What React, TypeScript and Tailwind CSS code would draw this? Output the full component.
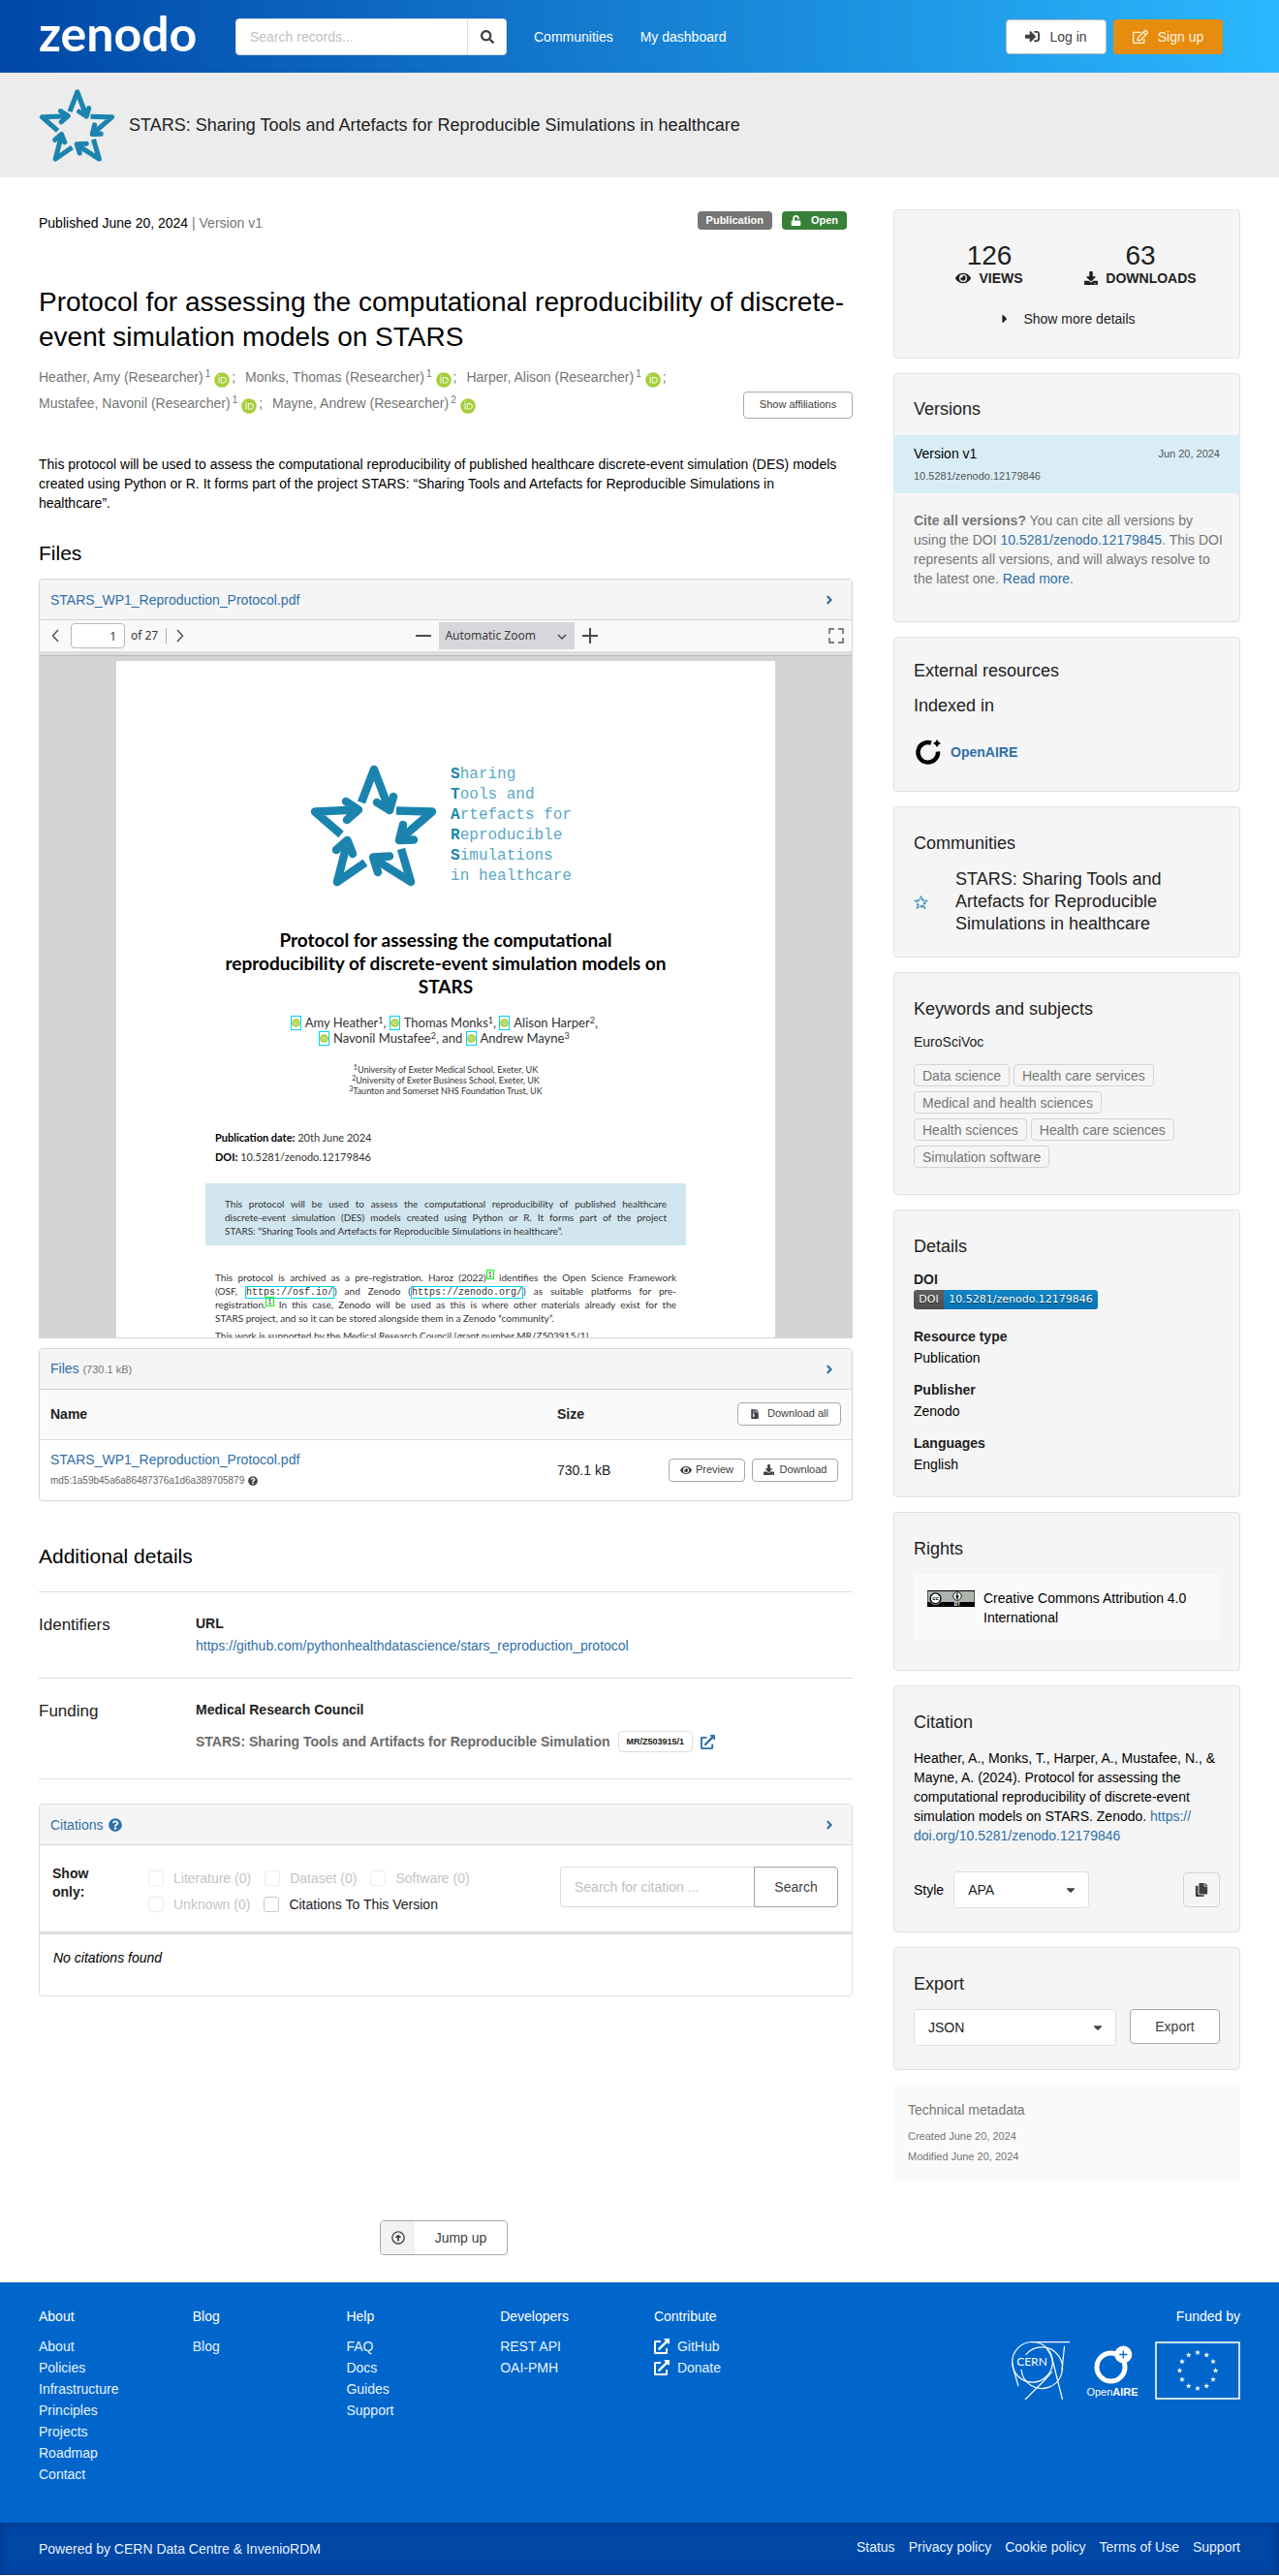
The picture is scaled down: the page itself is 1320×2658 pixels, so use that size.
import type { ReactNode } from 'react';
import {
  FaAngleRight,
  FaCaretDown,
  FaCaretRight,
  FaCopy,
  FaDownload,
  FaExternalLinkAlt,
  FaEye,
  FaFileArchive,
  FaOrcid,
  FaQuestionCircle,
  FaRegArrowAltCircleUp,
  FaRegEdit,
  FaSearch,
  FaSignInAlt,
  FaUnlock,
} from 'react-icons/fa';

function StarsLogo({ className }: { className: string }) {
  return (
    <svg viewBox="0 0 131 126" className={className} fill="none" stroke="#1b84ae" strokeWidth="8.5" strokeLinejoin="round" aria-hidden="true">
      <path d="M53 39 L66 5 L82 47" />
      <path d="M89 47.5 L126 48.5 L93 77" />
      <path d="M94 87 L104 121 L66 97" />
      <path d="M57 101 L28 121 L38.5 80" />
      <path d="M32 72 L5 48.5 L49 46.5" />
      <g strokeLinecap="round">
        <path d="M69 39 L82 47 L86 33" />
        <path d="M96 62 L92 78 L107 77.5" />
        <path d="M82 94.5 L65 95.5 L70 111" />
        <path d="M27 88 L38.5 78 L44 92" />
        <path d="M37 38 L50 46.5 L38 57" />
      </g>
    </svg>
  );
}

function Orcid({ className }: { className: string }) {
  return (
    <span className={'inline-flex shrink-0 rounded-full bg-white text-[#a6ce39] ' + className}>
      <FaOrcid className="h-full w-full" />
    </span>
  );
}

function OpenAireMark() {
  return (
    <svg viewBox="0 0 30 28" className="h-7 w-[30px]" aria-hidden="true">
      <path d="M18 4.6 A10.3 10.3 0 1 0 25 13.5" fill="none" stroke="#000" strokeWidth="4.4" />
      <path d="M24 1 L25.6 3.6 L28 5 L25.6 6.5 L24 9 L22.4 6.5 L20 5 L22.4 3.6 Z" fill="#000" />
    </svg>
  );
}

function CernLogo() {
  return (
    <svg viewBox="0 0 60 60" className="h-[60px] w-[60px]" fill="none" stroke="#fff" strokeWidth="1.2" role="img" aria-label="CERN">
      <circle cx="21.5" cy="21.3" r="20.8" />
      <path d="M14.5 14 A21.3 21.3 0 1 1 10 29" />
      <path d="M21 0.7 H60" />
      <path d="M36.500 7.500 Q41 13 42.500 20 L52.500 60" />
      <path d="M54.500 5 L52 30" />
      <path d="M42 31 Q38 36 34 40 L14 60" />
      <path d="M0.800 22 Q1.500 27 3 32 L7 46" />
      <text x="21" y="25" textAnchor="middle" fontSize="12" fill="#fff" stroke="none" fontFamily="Lato, sans-serif">CERN</text>
    </svg>
  );
}

function OpenAireFooterLogo() {
  return (
    <svg viewBox="0 0 54 60" className="h-[60px] w-[54px]" role="img" aria-label="OpenAIRE">
      <circle cx="25.500" cy="26.500" r="14.500" fill="none" stroke="#fff" strokeWidth="5" />
      <circle cx="38.300" cy="13.500" r="9" fill="#fff" />
      <path d="M34.300 13.500 H42.300 M38.300 9.500 V17.500" stroke="#0066cb" strokeWidth="1.300" />
      <text x="27" y="55.500" textAnchor="middle" fontSize="11" fill="#fff" fontFamily="Liberation Sans, sans-serif">
        Open<tspan fontWeight="700">AIRE</tspan>
      </text>
    </svg>
  );
}

const starPoints = '0,-3 0.8,-0.95 2.85,-0.93 1.2,0.4 1.76,2.43 0,1.25 -1.76,2.43 -1.2,0.4 -2.85,-0.93 -0.8,-0.95';

function EuLogo() {
  return (
    <svg viewBox="0 0 88 60" className="h-[60px] w-[88px]" role="img" aria-label="European Union">
      <rect x="1" y="1" width="86" height="58" fill="none" stroke="#fff" strokeWidth="1.600" />
      {Array.from({ length: 12 }, (_, i) => {
        const a = (i * Math.PI) / 6;
        return <polygon key={i} points={starPoints} fill="#fff" transform={`translate(${44 + 18.5 * Math.sin(a)} ${30 - 18.5 * Math.cos(a)})`} />;
      })}
    </svg>
  );
}

function CcBadge() {
  return (
    <svg viewBox="0 0 49 17" className="mt-0.5 h-[17px] w-[49px] shrink-0" role="img" aria-label="CC BY">
      <rect width="49" height="17" fill="#000" />
      <rect x="0.500" y="1" width="48" height="11" fill="#abb3ac" />
      <circle cx="8.500" cy="8.300" r="6.800" fill="#abb3ac" />
      <circle cx="8.500" cy="8.300" r="5.400" fill="#fff" stroke="#000" strokeWidth="1.300" />
      <text x="8.500" y="10.400" textAnchor="middle" fontSize="6" fontWeight="700" fontFamily="Liberation Sans, sans-serif">cc</text>
      <circle cx="31" cy="6" r="4.200" fill="#fff" stroke="#000" strokeWidth="0.900" />
      <circle cx="31" cy="3.600" r="0.900" />
      <path d="M29.600 4.900 H32.400 V7 H31.800 V9 H30.200 V7 H29.600 Z" />
      <text x="31" y="16.300" textAnchor="middle" fontSize="4.500" fontWeight="700" fill="#fff" fontFamily="Liberation Sans, sans-serif">BY</text>
    </svg>
  );
}

function Link({ children, className = '' }: { children: ReactNode; className?: string }) {
  return <a href="#" className={'text-[#2f6fa7] ' + className}>{children}</a>;
}

function Card({ title, className, children }: { title?: string; className: string; children: ReactNode }) {
  return (
    <section className={'rounded border border-[#e0e1e2] bg-[#f5f5f5] ' + className}>
      {title && <h2 className="px-5 text-lg/6 text-[#212121]">{title}</h2>}
      {children}
    </section>
  );
}

function PanelHeader({ children }: { children: ReactNode }) {
  return (
    <div className="flex h-[42px] items-center justify-between border-b border-[#d4d4d5] bg-[#f5f5f5] pr-4 pl-[11px]">
      <h3 className="flex items-center gap-2 leading-5">{children}</h3>
      <button type="button" aria-label="Toggle section" className="text-[#2f6fa7]">
        <FaAngleRight className="size-3.5" />
      </button>
    </div>
  );
}

function SmallButton({ children, className = '' }: { children: ReactNode; className?: string }) {
  return (
    <button type="button" className={'inline-flex h-6 items-center justify-center rounded border border-[#a8a8a8] bg-white text-[11px] text-[#404040] ' + className}>
      {children}
    </button>
  );
}

function Dropdown({ id, value, className }: { id: string; value: string; className: string }) {
  return (
    <div className={'relative ' + className}>
      <select id={id} aria-label={id} defaultValue={value} className="h-[38px] w-full appearance-none rounded border border-[#dedede] bg-white pr-8 pl-3.5 text-[#212121]">
        <option>{value}</option>
      </select>
      <FaCaretDown className="pointer-events-none absolute top-3 right-3 size-3.5 text-[#404040]" />
    </div>
  );
}

const authors = [
  ['Heather, Amy (Researcher)', '1'],
  ['Monks, Thomas (Researcher)', '1'],
  ['Harper, Alison (Researcher)', '1'],
  ['Mustafee, Navonil (Researcher)', '1'],
  ['Mayne, Andrew (Researcher)', '2'],
];

const acronym = [
  ['S', 'haring'],
  ['T', 'ools and'],
  ['A', 'rtefacts for'],
  ['R', 'eproducible'],
  ['S', 'imulations'],
  ['', 'in healthcare'],
];

function Sup({ children }: { children: ReactNode }) {
  return <sup className="top-[-0.5em] text-[9px]">{children}</sup>;
}

function PdfAuthor({ name, mark, tail }: { name: string; mark: string; tail: string }) {
  return (
    <span className="inline-flex items-center">
      <a href="#" aria-label={'ORCID of ' + name} className="mr-1 flex h-[15px] w-[11px] items-center justify-center border border-cyan-400">
        <Orcid className="size-[9px]" />
      </a>
      <span>{name}<Sup>{mark}</Sup>{tail}&nbsp;</span>
    </span>
  );
}

function Ref() {
  return <a href="#" className="relative -top-1 border border-[#00ff00] px-px text-[7px] leading-none">1</a>;
}

function PdfLink({ children }: { children: ReactNode }) {
  return <a href="#" className="border border-cyan-400 font-['Liberation_Mono',monospace] text-[10px]">{children}</a>;
}

function PdfPage() {
  return (
    <div className="mx-auto mt-[5px] w-full max-w-[680px] bg-white px-[92px] pt-[107px] font-[Lato,sans-serif] text-[10px]/[14px] text-[#333]">
      <div className="-mx-10 flex items-center justify-center gap-3.5 pr-2.5">
        <StarsLogo className="h-[126px] w-[131px]" />
        <div className="font-['Liberation_Mono',monospace] text-base/[21px] text-[#5ba8c6]">
          {acronym.map(([a, b]) => (
            <div key={b}><b className="text-[#1b84ae]">{a}</b>{b}</div>
          ))}
        </div>
      </div>
      <div className="mt-[43px] text-center text-[19px]/6 font-bold text-black">
        Protocol for assessing the computational<br />reproducibility of discrete-event simulation models on<br />STARS
      </div>
      <div className="mt-[17px] text-center text-[13px]/4">
        <div className="flex h-4 justify-center">
          <PdfAuthor name="Amy Heather" mark="1" tail="," />
          <PdfAuthor name="Thomas Monks" mark="1" tail="," />
          <PdfAuthor name="Alison Harper" mark="2" tail="," />
        </div>
        <div className="flex h-4 justify-center">
          <PdfAuthor name="Navonil Mustafee" mark="2" tail=", and" />
          <PdfAuthor name="Andrew Mayne" mark="3" tail="" />
        </div>
      </div>
      <div className="mt-[19px] text-center text-[9px]/[11px]">
        <div><sup className="text-[7px]">1</sup>University of Exeter Medical School, Exeter, UK</div>
        <div><sup className="text-[7px]">2</sup>University of Exeter Business School, Exeter, UK</div>
        <div><sup className="text-[7px]">3</sup>Taunton and Somerset NHS Foundation Trust, UK</div>
      </div>
      <div className="mt-[33px] px-2.5 text-[11px]/5">
        <div><b className="text-black">Publication date:</b> 20th June 2024</div>
        <div><b className="text-black">DOI:</b> 10.5281/zenodo.12179846</div>
      </div>
      <div className="mt-[17px] bg-[#d1e6ef] px-5 pt-3.5 pb-2">
        <div className="[text-align-last:justify]">This protocol will be used to assess the computational reproducibility of published healthcare</div>
        <div className="[text-align-last:justify]">discrete-event simulation (DES) models created using Python or R. It forms part of the project</div>
        <div>STARS: “Sharing Tools and Artefacts for Reproducible Simulations in healthcare”.</div>
      </div>
      <div className="mt-[26px] px-2.5">
        <div className="[text-align-last:justify]">This protocol is archived as a pre-registration. Haroz (2022)<Ref /> identifies the Open Science Framework</div>
        <div className="h-3.5 [text-align-last:justify]">(OSF, <PdfLink>https://osf.io/</PdfLink>) and Zenodo (<PdfLink>https://zenodo.org/</PdfLink>) as suitable platforms for pre-</div>
        <div className="[text-align-last:justify]">registration.<Ref /> In this case, Zenodo will be used as this is where other materials already exist for the</div>
        <div>STARS project, and so it can be stored alongside them in a Zenodo “community”.</div>
        <div className="mt-1">This work is supported by the Medical Research Council [grant number MR/Z503915/1].</div>
      </div>
    </div>
  );
}

function Viewer() {
  return (
    <section className="mt-3 overflow-hidden rounded-t border border-[#d4d4d5]">
      <PanelHeader><Link>STARS_WP1_Reproduction_Protocol.pdf</Link></PanelHeader>
      <div className="flex h-8 items-center justify-between bg-[#f9f9fa] px-2 font-['Noto_Sans',sans-serif] text-xs text-[#3a3a3a]">
        <div className="flex flex-[3] items-center">
          <button type="button" aria-label="Previous page" className="mr-3 ml-1">
            <svg viewBox="0 0 8 14" className="h-3.5 w-2" fill="none" stroke="#555" strokeWidth="1.500"><path d="M7 1 L1.500 7 L7 13" /></svg>
          </button>
          <input aria-label="Page" defaultValue="1" className="h-[26px] w-14 rounded-sm border border-[#bbbbbc] bg-white px-2 text-right" />
          <span className="mr-2 ml-1.5 text-xs">of 27</span>
          <span className="h-4 border-l border-[#b0b0b0]" />
          <button type="button" aria-label="Next page" className="ml-2.5">
            <svg viewBox="0 0 8 14" className="h-3.5 w-2" fill="none" stroke="#555" strokeWidth="1.500"><path d="M1 1 L6.500 7 L1 13" /></svg>
          </button>
        </div>
        <div className="flex items-center gap-2">
          <button type="button" aria-label="Zoom out"><svg viewBox="0 0 16 16" className="size-4" stroke="#4a4a4a" strokeWidth="2"><path d="M0 8 H16" /></svg></button>
          <div className="relative">
            <select aria-label="Zoom" className="h-7 w-[140px] appearance-none bg-[#d7d7db] pl-1.5 outline-none">
              <option>Automatic Zoom</option>
            </select>
            <svg viewBox="0 0 10 6" className="pointer-events-none absolute top-3 right-2 h-1.5 w-2.5" fill="none" stroke="#444" strokeWidth="1.400"><path d="M1 1 L5 5 L9 1" /></svg>
          </div>
          <button type="button" aria-label="Zoom in"><svg viewBox="0 0 16 16" className="size-4" stroke="#4a4a4a" strokeWidth="2"><path d="M0 8 H16 M8 0 V16" /></svg></button>
        </div>
        <div className="flex flex-[2] justify-end">
          <button type="button" aria-label="Fullscreen">
            <svg viewBox="0 0 16 16" className="size-4" fill="none" stroke="#555" strokeWidth="1.400"><path d="M1 6 V1 H6 M10 1 H15 V6 M15 10 V15 H10 M6 15 H1 V10" /></svg>
          </button>
        </div>
      </div>
      <div className="h-[5px] border-b border-[#b8b8ba] bg-[#dededf]" />
      <div className="h-[703px] overflow-hidden bg-[#d4d4d7]"><PdfPage /></div>
    </section>
  );
}

function FilesTable() {
  return (
    <section className="mt-2.5 overflow-hidden rounded border border-[#d4d4d5]">
      <PanelHeader><span><Link>Files</Link> <span className="text-[11px] text-[#757575]">(730.1 kB)</span></span></PanelHeader>
      <table className="w-full text-left text-[#212121]">
        <thead>
          <tr className="h-[51px] border-b border-[#e0e1e2] bg-[#f9fafb]">
            <th className="pl-[11px]">Name</th>
            <th className="w-24">Size</th>
            <th className="w-52 pr-[11px] text-right">
              <SmallButton className="gap-2 px-3 font-normal"><FaFileArchive className="size-2.5" />Download all</SmallButton>
            </th>
          </tr>
        </thead>
        <tbody>
          <tr className="h-[63px]">
            <td className="pl-[11px]">
              <Link>STARS_WP1_Reproduction_Protocol.pdf</Link>
              <div className="mt-0.5 flex items-center gap-1 text-[10px]/5 text-[#666]">md5:1a59b45a6a86487376a1d6a389705879 <FaQuestionCircle className="size-2.5 text-[#444]" /></div>
            </td>
            <td>730.1 kB</td>
            <td className="pr-3.5">
              <div className="flex justify-end gap-[7px]">
                <SmallButton className="w-[79px] gap-1"><FaEye className="size-3" />Preview</SmallButton>
                <SmallButton className="w-[89px] gap-1.5"><FaDownload className="size-[11px]" />Download</SmallButton>
              </div>
            </td>
          </tr>
        </tbody>
      </table>
    </section>
  );
}

function Check({ label, enabled = false }: { label: string; enabled?: boolean }) {
  return (
    <label className={'flex items-center gap-2.5 ' + (enabled ? 'text-[#212121]' : 'text-[#c4c4c4]')}>
      <input type="checkbox" disabled={!enabled} className={'size-4 appearance-none rounded-[3px] border bg-white ' + (enabled ? 'border-[#c8c8c9]' : 'border-[#ececec]')} />
      {label}
    </label>
  );
}

function Citations() {
  return (
    <section className="mt-[25px] overflow-hidden rounded border border-[#dcdddd]">
      <PanelHeader><Link className="flex items-center gap-1.5">Citations <FaQuestionCircle className="size-3.5" /></Link></PanelHeader>
      <div className="flex h-[92px] items-start border-b-[3px] border-[#dedede] pr-3.5 pl-[13px]">
        <div className="mt-5 w-[99px] pr-12 leading-[19px] font-bold text-[#212121]">Show only:</div>
        <div className="mt-6 flex flex-1 flex-col gap-[7px]">
          <div className="flex gap-3.5"><Check label="Literature (0)" /><Check label="Dataset (0)" /><Check label="Software (0)" /></div>
          <div className="flex gap-3.5"><Check label="Unknown (0)" /><Check label="Citations To This Version" enabled /></div>
        </div>
        <form className="mt-[22px] flex h-[42px] w-[287px]">
          <input aria-label="Search for citation" placeholder="Search for citation ..." className="min-w-0 flex-1 rounded-l border border-r-0 border-[#dcdcdd] px-3.5 placeholder:text-[#bfbfbf]" />
          <button type="button" className="w-[87px] rounded-r border border-[#a0a0a0] text-[#404040]">Search</button>
        </form>
      </div>
      <div className="px-3.5 pt-3.5 pb-[29px] text-black italic">No citations found</div>
    </section>
  );
}

const tags = ['Data science', 'Health care services', 'Medical and health sciences', 'Health sciences', 'Health care sciences', 'Simulation software'];

function Sidebar() {
  return (
    <aside className="flex flex-col gap-[15px]">
      <Card className="px-4 pt-[33px] pb-[30px] text-center text-[#212121]">
        <div className="flex pl-1">
          <div className="flex-1">
            <div className="text-[28px]/7">126</div>
            <div className="flex items-center justify-center gap-2 leading-[18px] font-bold"><FaEye className="size-4" />VIEWS</div>
          </div>
          <div className="flex-1 pr-2">
            <div className="text-[28px]/7">63</div>
            <div className="flex items-center justify-center gap-2 leading-[18px] font-bold"><FaDownload className="size-3.5" />DOWNLOADS</div>
          </div>
        </div>
        <button type="button" className="mt-[23px] inline-flex items-center gap-3 align-top leading-5"><FaCaretRight className="size-3.5" />Show more details</button>
      </Card>

      <Card title="Versions" className="pt-6 pb-[34px]">
        <div className="-mx-px mt-[15px] bg-[#d9edf7] px-[21px] pt-[9px] pb-2.5">
          <div className="flex items-center justify-between leading-5 text-black">Version v1<span className="text-[11px] text-[#555]">Jun 20, 2024</span></div>
          <div className="mt-[5px] text-[11px]/4 text-[#555]">10.5281/zenodo.12179846</div>
        </div>
        <p className="mt-[18px] pr-3 pl-5 leading-5 text-[#757575]">
          <b>Cite all versions?</b> You can cite all versions by using the DOI <Link>10.5281/zenodo.12179845</Link>. This DOI represents all versions, and will always resolve to the latest one. <Link>Read more</Link>.
        </p>
      </Card>

      <Card title="External resources" className="pt-[22px] pb-[26px]">
        <h3 className="mt-3 px-5 text-lg/6 text-[#212121]">Indexed in</h3>
        <div className="mt-[22px] flex items-center gap-2 pl-5"><OpenAireMark /><Link className="font-bold">OpenAIRE</Link></div>
      </Card>

      <Card title="Communities" className="pt-[25px] pb-[22px]">
        <div className="mt-3.5 flex items-center gap-7 px-5">
          <StarsLogo className="h-3.5 w-[15px] shrink-0" />
          <a href="#" className="text-lg/[23px] text-[#212121]">STARS: Sharing Tools and Artefacts for Reproducible Simulations in healthcare</a>
        </div>
      </Card>

      <Card title="Keywords and subjects" className="pt-[25px] pb-[27px]">
        <h3 className="mt-3 px-5 leading-5 text-[#212121]">EuroSciVoc</h3>
        <div className="mt-[13px] flex flex-wrap gap-x-1 gap-y-[5px] pr-12 pl-5">
          {tags.map((t) => (
            <a key={t} href="#" className="flex h-[23px] items-center rounded border border-[#d4d4d5] px-2 text-[#757575]">{t}</a>
          ))}
        </div>
      </Card>

      <Card title="Details" className="pt-[25px] pb-[23px]">
        <dl className="px-5 leading-5">
          <dt className="mt-3 font-bold text-[#212121]">DOI</dt>
          <dd className="mt-px flex h-5 w-[190px] overflow-hidden rounded-[3px] font-['DejaVu_Sans',sans-serif] text-[11px] text-white [text-shadow:0_1px_1px_#0008]">
            <span className="w-[31px] bg-[linear-gradient(#5f5f5f,#4d4d4d)] text-center">DOI</span>
            <a href="#" className="flex-1 bg-[linear-gradient(#1486c6,#0273b4)] text-center whitespace-nowrap">10.5281/zenodo.12179846</a>
          </dd>
          <dt className="mt-[18px] font-bold text-[#212121]">Resource type</dt>
          <dd className="mt-0.5 text-black">Publication</dd>
          <dt className="mt-[13px] font-bold text-[#212121]">Publisher</dt>
          <dd className="mt-0.5 text-black">Zenodo</dd>
          <dt className="mt-[13px] font-bold text-[#212121]">Languages</dt>
          <dd className="mt-0.5 text-black">English</dd>
        </dl>
      </Card>

      <Card title="Rights" className="pt-[25px] pb-[31px]">
        <div className="mx-5 mt-3.5 flex gap-[9px] bg-[#fafafa] px-3.5 pt-[15px] pb-[13px] leading-5 text-black">
          <CcBadge />
          <span>Creative Commons Attribution 4.0 International</span>
        </div>
      </Card>

      <Card title="Citation" className="pt-[25px] pb-6">
        <p className="mt-[15px] pr-[18px] pl-5 leading-5 text-black">
          Heather, A., Monks, T., Harper, A., Mustafee, N., &amp; Mayne, A. (2024). Protocol for assessing the computational reproducibility of discrete-event simulation models on STARS. Zenodo. <Link>https://<wbr />doi.org/10.5281/zenodo.12179846</Link>
        </p>
        <div className="mt-[27px] flex items-center px-5 text-black">
          <label htmlFor="Style" className="mr-2.5">Style</label>
          <Dropdown id="Style" value="APA" className="w-[140px]" />
          <button type="button" aria-label="Copy citation" className="ml-auto flex h-9 w-[38px] items-center justify-center rounded border border-[#d4d4d5] text-[#404040]"><FaCopy className="size-3.5" /></button>
        </div>
      </Card>

      <Card title="Export" className="pt-[25px] pb-6">
        <div className="mt-3.5 flex gap-3.5 px-5">
          <Dropdown id="Format" value="JSON" className="flex-1" />
          <button type="button" className="h-9 w-[93px] rounded border border-[#a8a8a8] bg-white text-[#404040]">Export</button>
        </div>
      </Card>

      <section className="rounded bg-[#fafafa] px-[15px] pt-4 pb-[15px] text-[#757575]">
        <h2 className="text-sm/5">Technical metadata</h2>
        <div className="mt-[7px] text-[11px]/5">Created June 20, 2024</div>
        <div className="mt-px text-[11px]/5">Modified June 20, 2024</div>
      </section>
    </aside>
  );
}

const footerColumns = [
  { title: 'About', links: ['About', 'Policies', 'Infrastructure', 'Principles', 'Projects', 'Roadmap', 'Contact'] },
  { title: 'Blog', links: ['Blog'] },
  { title: 'Help', links: ['FAQ', 'Docs', 'Guides', 'Support'] },
  { title: 'Developers', links: ['REST API', 'OAI-PMH'] },
  { title: 'Contribute', links: ['GitHub', 'Donate'] },
];

function Footer() {
  return (
    <footer className="mt-7 bg-[#0066cb] text-white">
      <div className="flex px-10 pt-[25px] pb-[39px]">
        <div className="grid w-[64%] grid-cols-5">
          {footerColumns.map((c) => (
            <nav key={c.title} aria-label={c.title + ' links'}>
              <h2 className="leading-5">{c.title}</h2>
              <ul className="mt-2.5 leading-[22px] text-[#e6f2ff]">
                {c.links.map((l) => (
                  <li key={l}>
                    <a href="#" className="flex items-center gap-2">{c.title === 'Contribute' && <FaExternalLinkAlt className="size-4 text-white" />}{l}</a>
                  </li>
                ))}
              </ul>
            </nav>
          ))}
        </div>
        <div className="flex flex-1 flex-col items-end">
          <h2 className="leading-5">Funded by</h2>
          <div className="mt-4 flex gap-[17px]"><CernLogo /><OpenAireFooterLogo /><EuLogo /></div>
        </div>
      </div>
      <div className="flex h-[54px] items-center justify-between bg-[#0047a6] px-10 text-[#e6f2ff] shadow-[inset_0_0_10px_#003380]">
        <span>Powered by CERN Data Centre &amp; InvenioRDM</span>
        <nav aria-label="Legal" className="mb-1 flex gap-3.5">
          {['Status', 'Privacy policy', 'Cookie policy', 'Terms of Use', 'Support'].map((l) => <a key={l} href="#">{l}</a>)}
        </nav>
      </div>
    </footer>
  );
}

export default function App() {
  return (
    <div className="bg-white font-['Liberation_Sans',Arial,sans-serif] text-sm text-black">
      <header className="flex h-[75px] items-center bg-[linear-gradient(to_right,#0047a6,#2bb8ff)] pr-[58px] pl-10 text-white">
        <a href="#" className="w-[203px] pb-2 font-[Lato,sans-serif] text-[50px]/[60px] font-bold">zenodo</a>
        <form className="flex h-[38px] w-[280px] overflow-hidden rounded border border-[#dcdcdd] bg-white">
          <input aria-label="Search records" placeholder="Search records..." className="min-w-0 flex-1 px-3.5 text-black placeholder:text-[#bfbfbf]" />
          <button type="button" aria-label="Search" className="flex w-10 items-center justify-center border-l border-[#dcdcdd] text-[#404040]"><FaSearch className="size-3.5" /></button>
        </form>
        <nav aria-label="Main" className="ml-7 flex gap-7">
          <a href="#">Communities</a>
          <a href="#">My dashboard</a>
        </nav>
        <div className="ml-auto flex gap-[7px]">
          <button type="button" className="flex h-9 w-[104px] items-center justify-center gap-2.5 rounded border border-[#bcbcbc] bg-white text-[#404040]"><FaSignInAlt className="size-[15px]" />Log in</button>
          <button type="button" className="flex h-9 w-[113px] items-center justify-center gap-2.5 rounded bg-[#e68d0f] text-[#fff3e0]"><FaRegEdit className="size-4" />Sign up</button>
        </div>
      </header>
      <div className="flex h-[108px] items-center gap-3.5 bg-[#ececec] px-10">
        <StarsLogo className="h-[75px] w-[79px]" />
        <a href="#" className="text-lg text-[#212121]">STARS: Sharing Tools and Artefacts for Reproducible Simulations in healthcare</a>
      </div>

      <div className="grid grid-cols-[minmax(0,1fr)_358px] gap-x-[42px] px-10 pt-[33px]">
        <main>
          <div className="flex items-start justify-between pt-0.5">
            <div className="pt-0.5 leading-5">Published June 20, 2024 <span className="text-[#757575]">| Version v1</span></div>
            <div className="flex gap-2.5 pr-1.5 text-[11px] font-bold text-white">
              <span className="flex h-[19px] items-center rounded bg-[#757575] px-[9px]">Publication</span>
              <span className="flex h-[19px] items-center gap-2.5 rounded bg-[#388038] px-[9px]"><FaUnlock className="size-[11px]" />Open</span>
            </div>
          </div>
          <h1 className="mt-[54px] text-[28px]/9">Protocol for assessing the computational reproducibility of discrete-event simulation models on STARS</h1>
          <div className="mt-2.5 flex items-end">
            <ul className="flex flex-1 flex-wrap gap-x-2.5 leading-[27px] text-[#757575]">
              {authors.map(([name, mark], i) => (
                <li key={name} className="flex h-[27px] items-center">
                  <a href="#">{name}<sup className="ml-0.5 text-[10px]">{mark}</sup></a>
                  <a href="#" aria-label={'ORCID of ' + name} className="mt-1 ml-1 flex"><Orcid className="size-4" /></a>
                  {i < 4 && <span className="ml-0.5">;</span>}
                </li>
              ))}
            </ul>
            <button type="button" className="-mb-0.5 h-7 w-[113px] rounded border border-[#a8a8a8] text-[11px] text-[#404040]">Show affiliations</button>
          </div>
          <p className="mt-[39px] pr-2 leading-5">
            This protocol will be used to assess the computational reproducibility of published healthcare discrete-event simulation (DES) models created using Python or R. It forms part of the project STARS: “Sharing Tools and Artefacts for Reproducible Simulations in healthcare”.
          </p>
          <h2 className="mt-7 text-[21px]/7">Files</h2>
          <Viewer />
          <FilesTable />
          <h2 className="mt-[43px] text-[21px]/7">Additional details</h2>
          <div className="mt-[22px] flex border-t border-[#dededf] pt-[22px] pb-[23px]">
            <h3 className="w-[162px] pt-0.5 text-[17px]/5 text-[#212121]">Identifiers</h3>
            <div className="leading-5">
              <div className="font-bold text-[#212121]">URL</div>
              <Link className="mt-[3px] block">https://github.com/pythonhealthdatascience/stars_reproduction_protocol</Link>
            </div>
          </div>
          <div className="flex border-y border-[#dededf] pt-[22px] pb-[27px]">
            <h3 className="w-[162px] pt-0.5 text-[17px]/5 text-[#212121]">Funding</h3>
            <div className="leading-5 font-bold">
              <div className="text-[#212121]">Medical Research Council</div>
              <div className="mt-3 flex items-center gap-2 text-[#6b6b6b]">
                STARS: Sharing Tools and Artifacts for Reproducible Simulation
                <span className="flex h-[22px] items-center rounded border border-[#dededf] px-2 text-[9px] text-[#212121]">MR/Z503915/1</span>
                <Link><FaExternalLinkAlt aria-label="Open award" className="size-[15px]" /></Link>
              </div>
            </div>
          </div>
          <Citations />
        </main>
        <Sidebar />
        <div className="mt-[41px] flex justify-center pr-1">
          <button type="button" className="flex h-9 w-[132px] items-center overflow-hidden rounded border border-[#a8a8a8] text-[#404040]">
            <span className="flex h-full w-[35px] items-center justify-center bg-[#f2f2f2]"><FaRegArrowAltCircleUp className="size-3.5" /></span>
            <span className="flex-1">Jump up</span>
          </button>
        </div>
      </div>
      <Footer />
    </div>
  );
}
